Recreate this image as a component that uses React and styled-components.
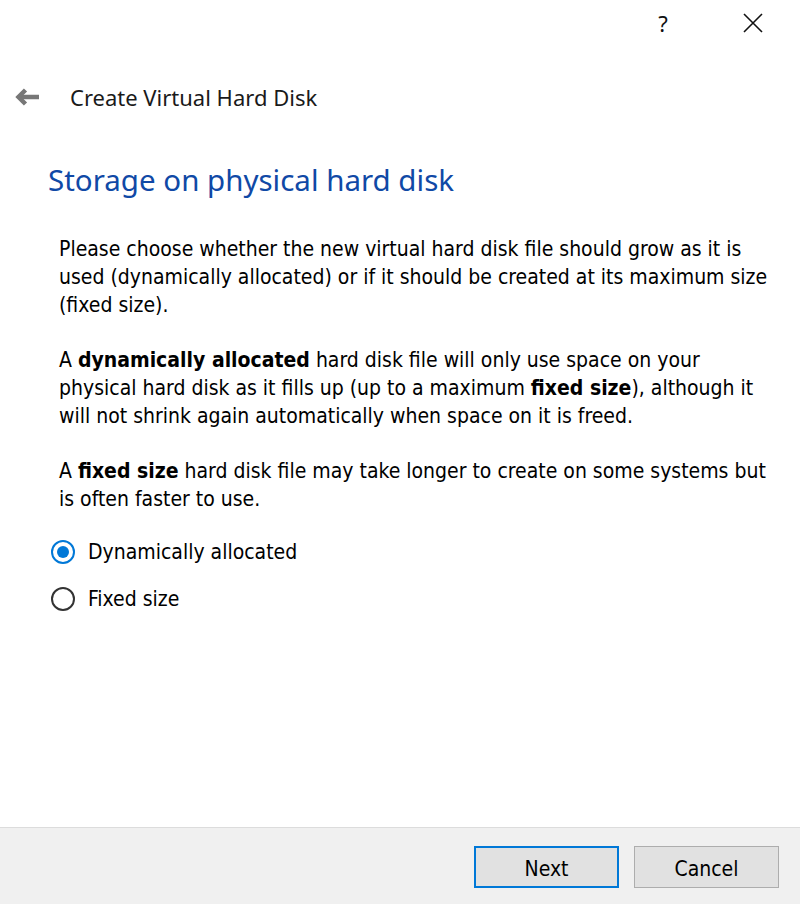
import React from "react";
import styled, { createGlobalStyle } from "styled-components";

const Global = createGlobalStyle`
  html, body { margin: 0; padding: 0; background: #fff; }
  #root { height: 904px; }
  * { box-sizing: border-box; }
`;

const Window = styled.div`
  width: 800px;
  height: 904px;
  display: flex;
  flex-direction: column;
  background: #fff;
  overflow: hidden;
`;

const TitleBar = styled.div`
  height: 46px;
  display: flex;
  justify-content: flex-end;
  align-items: center;
  padding-right: 2px;
`;

const CaptionButton = styled.button`
  width: 90px;
  height: 46px;
  border: none;
  background: transparent;
  display: flex;
  align-items: center;
  justify-content: center;
  padding: 0;
  font-family: "Noto Sans", sans-serif;
  font-size: 22px;
  color: #111;
`;

const Header = styled.div`
  display: flex;
  align-items: center;
  height: 52px;
  margin-top: 25px;
  padding-left: 14px;
`;

const BackIcon = styled.span`
  width: 28px;
  display: flex;
  align-items: center;
`;

const HeaderTitle = styled.div`
  margin-left: 28px;
  font-family: "Noto Sans", sans-serif;
  font-size: 22px;
  color: #1a1a1a;
`;

const Content = styled.div`
  flex: 1;
  padding: 0 20px 0 48px;
`;

const Heading = styled.h1`
  margin: 38px 0 0 0;
  font-family: "Noto Sans", sans-serif;
  font-weight: 400;
  font-size: 29.5px;
  color: #1049a6;
  line-height: 38px;
`;

const Body = styled.div`
  margin-top: 36px;
  padding-left: 11px;
  font-family: "DejaVu Sans Condensed", "DejaVu Sans", sans-serif;
  font-size: 21px;
  line-height: 28px;
  color: #000;
`;

const Para = styled.p`
  margin: 0 0 27px 0;
`;

const Options = styled.div`
  display: flex;
  flex-direction: column;
  gap: 23px;
  padding-left: 3px;
`;

const Option = styled.label`
  display: flex;
  align-items: center;
  gap: 13px;
  font-family: "DejaVu Sans Condensed", "DejaVu Sans", sans-serif;
  font-size: 21px;
  color: #000;
  height: 24px;
`;

const Radio = styled.span`
  width: 24px;
  height: 24px;
  border-radius: 50%;
  border: 2px solid ${(p) => (p.checked ? "#0078d7" : "#333")};
  display: flex;
  align-items: center;
  justify-content: center;
  &::after {
    content: "";
    width: 12px;
    height: 12px;
    border-radius: 50%;
    background: ${(p) => (p.checked ? "#0078d7" : "transparent")};
  }
`;

const Footer = styled.div`
  height: 77px;
  background: #f0f0f0;
  border-top: 1px solid #dcdcdc;
  display: flex;
  justify-content: flex-end;
  align-items: flex-start;
  gap: 15px;
  padding: 18px 21px 0 0;
`;

const Button = styled.button`
  width: 145px;
  height: 42px;
  background: #e1e1e1;
  border: ${(p) => (p.primary ? "2px solid #0078d7" : "1px solid #adadad")};
  font-family: "DejaVu Sans Condensed", "DejaVu Sans", sans-serif;
  font-size: 21px;
  color: #000;
  padding: 3px 0 0 0;
`;

export default function App() {
  return (
    <Window>
      <Global />
      <TitleBar>
        <CaptionButton aria-label="Help">?</CaptionButton>
        <CaptionButton aria-label="Close">
          <svg width="20" height="20" viewBox="0 0 20 20">
            <path d="M1 1 L19 19 M19 1 L1 19" stroke="#111" strokeWidth="1.6" fill="none" />
          </svg>
        </CaptionButton>
      </TitleBar>
      <Header>
        <BackIcon>
          <svg width="26" height="20" viewBox="0 0 26 20">
            <path d="M25 10 H5" stroke="#777" strokeWidth="4.5" fill="none" />
            <path d="M11.5 3 L4.5 10 L11.5 17" stroke="#777" strokeWidth="4.5" fill="none" strokeLinejoin="miter" />
          </svg>
        </BackIcon>
        <HeaderTitle>Create Virtual Hard Disk</HeaderTitle>
      </Header>
      <Content>
        <Heading>Storage on physical hard disk</Heading>
        <Body>
          <Para>
            Please choose whether the new virtual hard disk file should grow as it is
            used (dynamically allocated) or if it should be created at its maximum size
            (fixed size).
          </Para>
          <Para>
            A <b>dynamically allocated</b> hard disk file will only use space on your
            physical hard disk as it fills up (up to a maximum <b>fixed size</b>), although it
            will not shrink again automatically when space on it is freed.
          </Para>
          <Para>
            A <b>fixed size</b> hard disk file may take longer to create on some systems but
            is often faster to use.
          </Para>
        </Body>
        <Options>
          <Option>
            <Radio checked />
            Dynamically allocated
          </Option>
          <Option>
            <Radio />
            Fixed size
          </Option>
        </Options>
      </Content>
      <Footer>
        <Button primary>Next</Button>
        <Button>Cancel</Button>
      </Footer>
    </Window>
  );
}
